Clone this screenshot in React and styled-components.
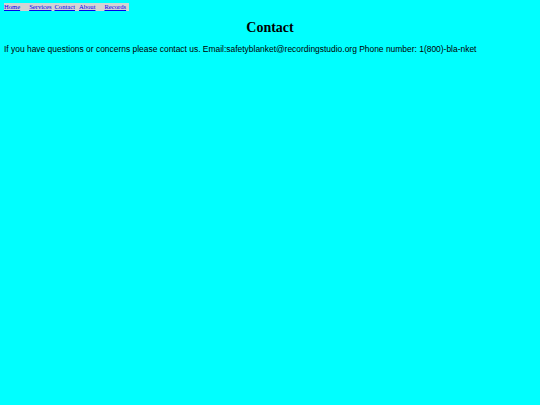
import styled, { createGlobalStyle } from "styled-components";

const Global = createGlobalStyle`
    body {
        margin: 3px 4px;
        background-color: #00ffff;
        font-family: "Liberation Serif", "Times New Roman", serif;
    }
`

const Nav = styled.nav`
    display: flex;
    width: fit-content;
    background-color: #d3d3d3;
    font-size: 6.6px;
    line-height: 8px;
    padding-right: 3px;
`

const NavLink = styled.a`
    color: #0000ee;
    text-decoration: underline;
    margin-right: ${(props) => props.$gap}px;
`

const Title = styled.h1`
    text-align: center;
    font-size: 14px;
    line-height: 16px;
    margin: 9px 0 8px 0;
`

const Text = styled.p`
    font-family: "Liberation Sans", Arial, sans-serif;
    font-size: 8.45px;
    margin: 0;
`

const links = [
    { label: "Home", gap: 9 },
    { label: "Services", gap: 3 },
    { label: "Contact", gap: 4 },
    { label: "About", gap: 9 },
    { label: "Records", gap: 0 },
]

const App = () => {
    return (
        <>
            <Global />
            <Nav>
                {links.map((link) => (
                    <NavLink key={link.label} href="#" $gap={link.gap}>{link.label}</NavLink>
                ))}
            </Nav>
            <Title>Contact</Title>
            <Text>
                If you have questions or concerns please contact us. Email:safetyblanket@recordingstudio.org Phone number: 1(800)-bla-nket
            </Text>
        </>
    );
}

export default App;
